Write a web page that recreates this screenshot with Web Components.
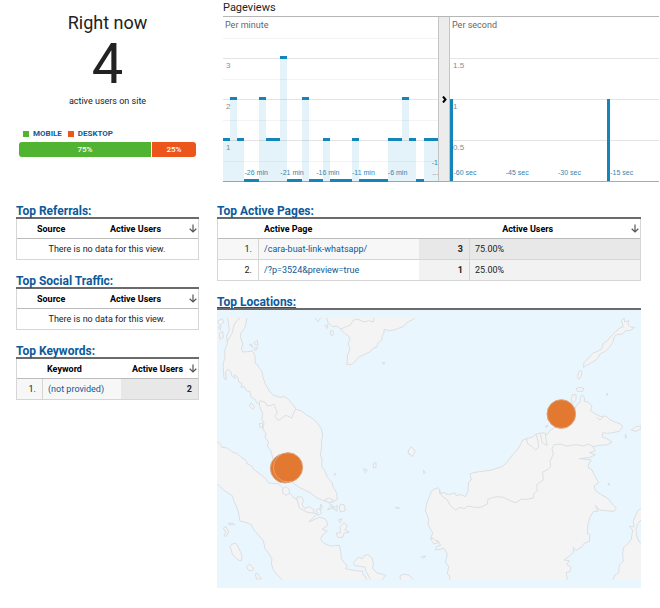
<!DOCTYPE html>
<html lang="en">
<head>
<meta charset="utf-8">
<title>Real-time overview</title>
<style>
  :root {
    --font: Roboto, "Liberation Sans", sans-serif;
    --fs-xs: 8px;
    --fs-sm: 9px;
    --fs-md: 11px;
    --fs-lg: 12px;
    --link: #0b5a9a;
    --accent: #1485b8;
    --line: #d6d6d6;
    --rule: #6b6b6b;
  }
  body {
    margin: 0;
    background: #fff;
    color: #222;
    font-family: var(--font);
    font-size: var(--fs-sm);
  }
</style>
</head>
<body>
<realtime-page>
  <active-counter slot="counter" count="4">
    <span slot="title">Right now</span>
    <span slot="caption">active users on site</span>
    <device-split></device-split>
  </active-counter>
  <pageviews-panel slot="charts">
    <bar-chart id="minutes" slot="minute">Per minute</bar-chart>
    <bar-chart id="seconds" slot="second">Per second</bar-chart>
  </pageviews-panel>
  <report-panel slot="side"><a href="#referrals">Top Referrals:</a>
    <report-table id="referrals" slot="body"></report-table></report-panel>
  <report-panel slot="side"><a href="#social">Top Social Traffic:</a>
    <report-table id="social" slot="body"></report-table></report-panel>
  <report-panel slot="side"><a href="#keywords">Top Keywords:</a>
    <report-table id="keywords" slot="body"></report-table></report-panel>
  <report-panel slot="main"><a href="#pages">Top Active Pages:</a>
    <report-table id="pages" slot="body"></report-table></report-panel>
  <report-panel slot="main" underlined><a href="#locations">Top Locations:</a>
    <location-map id="locations" slot="body"></location-map></report-panel>
</realtime-page>

<script>
function define(name, html, Base = class extends HTMLElement {}) {
  const template = document.createElement('template');
  template.innerHTML = html;
  customElements.define(name, class extends Base {
    connectedCallback() {
      if (this.shadowRoot) return;
      this.attachShadow({ mode: 'open' }).append(template.content.cloneNode(true));
      this.render?.();
    }
  });
}

define('realtime-page', `
  <style>
    :host { display: block; padding: 0 1px 20px 16px; }
    .top { display: grid; grid-template-columns: 183px minmax(0, 1fr); gap: 24px; height: 203px; }
    .reports {
      display: grid;
      grid-template-columns: 183px minmax(0, 1fr);
      gap: 18px;
      align-items: start;
      padding-right: 18px;
    }
    .col { display: flex; flex-direction: column; gap: 13px; min-width: 0; }
  </style>
  <section class="top"><slot name="counter"></slot><slot name="charts"></slot></section>
  <section class="reports">
    <div class="col"><slot name="side"></slot></div>
    <div class="col"><slot name="main"></slot></div>
  </section>
`);

define('active-counter', `
  <style>
    :host { display: flex; flex-direction: column; text-align: center; padding-top: 12px; }
    h1 { margin: 0; font-size: 18px; line-height: 22px; font-weight: 400; }
    .count { font-size: 56px; line-height: 60px; }
    p { margin: 0 0 20px; line-height: 14px; }
  </style>
  <h1><slot name="title"></slot></h1>
  <div class="count"></div>
  <p><slot name="caption"></slot></p>
  <slot></slot>
`, class extends HTMLElement {
  render() {
    this.shadowRoot.querySelector('.count').textContent = this.getAttribute('count');
  }
});

define('device-split', `
  <style>
    :host { display: block; padding: 0 3px; }
    ul {
      display: flex;
      gap: 6px;
      margin: 0 0 3px;
      padding: 0 4px;
      list-style: none;
      color: var(--link);
      font-size: var(--fs-xs);
      font-weight: 700;
      line-height: 11px;
    }
    li { display: flex; align-items: center; gap: 4px; }
    li::before { content: ""; width: 6px; height: 6px; background: var(--c); }
    .mobile { --c: #50b432; }
    .desktop { --c: #ed561b; }
    .bar { display: flex; gap: 1px; height: 15px; border-radius: 3px; overflow: hidden; }
    .bar span {
      flex: 1;
      background: var(--c);
      color: #fff;
      font-size: var(--fs-xs);
      font-weight: 500;
      line-height: 15px;
      text-align: center;
    }
    .bar .mobile { flex-grow: 3; }
  </style>
  <ul><li class="mobile">MOBILE</li><li class="desktop">DESKTOP</li></ul>
  <div class="bar"><span class="mobile">75%</span><span class="desktop">25%</span></div>
`);

define('pageviews-panel', `
  <style>
    :host { display: block; min-width: 0; }
    h2 { margin: 0; font-size: var(--fs-md); line-height: 16px; font-weight: 400; }
    .charts {
      display: grid;
      grid-template-columns: minmax(0, 215fr) 12px minmax(0, 209fr);
      height: 164px;
      border-top: 1px solid #b5b5b5;
      border-bottom: 1px solid #aaa;
    }
    button {
      display: grid;
      place-items: center;
      padding: 0;
      border: solid #c4c4c4;
      border-width: 0 1px;
      background: #ececec;
    }
  </style>
  <h2>Pageviews</h2>
  <div class="charts">
    <slot name="minute"></slot>
    <button type="button" aria-label="Collapse per minute chart">
      <svg width="5" height="7" viewBox="0 0 5 7" fill="none" stroke="#000" stroke-width="2"><path d="M1 .5 3.500 3.500 1 6.500"/></svg>
    </button>
    <slot name="second"></slot>
  </div>
`);

define('bar-chart', `
  <style>
    :host { position: relative; display: block; min-width: 0; color: #666; }
    .title { position: relative; display: block; padding-left: 2px; font-size: var(--fs-sm); line-height: 17px; }
    .plot, .lines, .x { position: absolute; inset: 0; display: grid; }
    .plot { grid-template-columns: repeat(var(--n), minmax(0, 1fr)); align-items: end; }
    .lines { grid-template-rows: repeat(var(--rows), 1fr); }
    .lines span {
      box-sizing: border-box;
      padding: 2px 0 0 3px;
      border-top: 1px solid #f3f3f3;
      color: #8c8c8c;
      font: var(--fs-xs)/10px "Liberation Sans", sans-serif;
    }
    .lines span:first-child { border-color: transparent; }
    .lines .major { border-color: #e4e4e4; }
    .bar { height: calc(var(--v) * 1%); background: rgb(5 141 199 / 11%); }
    .step .bar { border-top: 3px solid var(--accent); margin-bottom: -1px; }
    .solid .bar { background: var(--accent); }
    .x {
      grid-template-columns: repeat(var(--n), minmax(0, 1fr));
      align-items: end;
      padding-bottom: 3px;
      color: #3585b0;
      font: 7px/10px "Liberation Sans", sans-serif;
      white-space: nowrap;
    }
    .x span { grid-row: 1; }
  </style>
  <div class="lines"></div>
  <div class="plot"></div>
  <div class="x"></div>
  <span class="title"><slot></slot></span>
`, class extends HTMLElement {
  set data(d) {
    const $ = (s) => this.shadowRoot.querySelector(s);
    this.style.setProperty('--n', d.values.length);
    this.style.setProperty('--rows', d.rows.length);
    $('.lines').innerHTML = d.rows.map((r) => `<span class="${r === '' ? '' : 'major'}">${r}</span>`).join('');
    $('.plot').classList.add(d.kind);
    $('.plot').innerHTML = d.values
      .map((v) => (v || d.kind === 'step' ? `<i class="bar" style="--v:${(v / d.max) * 100}"></i>` : '<i></i>'))
      .join('');
    $('.x').innerHTML = d.labels
      .map(([at, text, align = 'start']) => `<span style="grid-column:${at};justify-self:${align};text-align:right">${text}</span>`)
      .join('');
  }
});

define('report-panel', `
  <style>
    :host { display: block; }
    h2 {
      margin: 0;
      padding-top: 2px;
      border-bottom: 2px solid var(--rule);
      font-size: var(--fs-lg);
      font-weight: 700;
      line-height: 12px;
    }
    ::slotted(a) { color: var(--link); text-decoration: none; }
    :host([underlined]) ::slotted(a) { text-decoration: underline; }
  </style>
  <h2><slot></slot></h2>
  <slot name="body"></slot>
`);

define('report-table', `
  <style>
    :host { display: block; }
    table {
      width: 100%;
      border: 1px solid var(--line);
      border-top: 0;
      border-collapse: separate;
      border-spacing: 0;
      table-layout: fixed;
    }
    th, td { box-sizing: border-box; padding: 0 6px 0 5px; font-size: var(--fs-sm); line-height: 12px; text-align: left; }
    th { height: 20px; padding-right: 0; border-bottom: 1px solid #bbb; color: #000; font-weight: 700; white-space: nowrap; }
    td { height: 20px; }
    tr + tr td { height: 21px; border-top: 1px solid var(--line); }
    .sort { display: flex; align-items: center; padding-right: 1px; }
    .sort span { flex: 1; text-align: center; }
    .num { border-right: 1px solid var(--line); text-align: right; }
    .ranked tbody tr:first-child { background: #f7f7f7; }
    .users { background: #f2f2f2; }
    .ranked tr:first-child .users { background: #e8e8e8; }
    .count { font-weight: 700; text-align: right; }
    .split .count { border-right: 1px solid var(--line); }
    .empty td { text-align: center; }
    a { color: var(--link); text-decoration: none; }
  </style>
  <table></table>
`, class extends HTMLElement {
  set data({ cols, head, indent, rows }) {
    const ranked = rows.length > 0;
    const split = ranked && rows[0].length === 3;
    const row = ([name, count, share], i) => `
      <tr>
        <td class="num">${i + 1}.</td>
        <td><a href="#">${name}</a></td>
        <td class="users count">${count}</td>
        ${share ? `<td class="users">${share}</td>` : ''}
      </tr>`;
    this.shadowRoot.querySelector('table').className = `${ranked ? 'ranked' : 'empty'} ${split ? 'split' : ''}`;
    this.shadowRoot.querySelector('table').innerHTML = `
      <colgroup>${cols.map((w) => `<col style="width:${w}">`).join('')}</colgroup>
      <thead><tr>
        <th colspan="${ranked ? 2 : 1}" style="padding-left:${indent}px">${head}</th>
        <th colspan="${split ? 2 : 1}"><div class="sort"><span>Active Users</span>
          <svg width="8" height="9" viewBox="0 0 8 9" fill="none" stroke="#555" stroke-width="1.2"><path d="M4 .5V8M.7 4.800 4 8l3.300-3.200"/></svg>
        </div></th>
      </tr></thead>
      <tbody>${ranked ? rows.map(row).join('') : '<tr><td colspan="2">There is no data for this view.</td></tr>'}</tbody>`;
  }
});

define('location-map', `
  <style>
    :host { display: block; background: #e9f6fe; }
    svg { display: block; width: 100%; height: auto; }
    .land path { fill: #f4f4f4; stroke: #dbdee0; stroke-width: 3; stroke-linejoin: round; }
    .land .border { fill: none; }
    .pin { fill: #e37830; stroke: #dba681; stroke-width: 3; }
  </style>
  <svg viewBox="21 30 1272 834" role="img" aria-label="Map of active users">
    <clipPath id="tiles"><rect x="21" y="54" width="1272" height="785"/></clipPath>
    <g class="land" clip-path="url(#tiles)">
      <!-- Malay peninsula -->
      <path d="M50 40 55 68 58 90 50 108 52 130 44 150 45 170 39 195 42 235 49 239 47 215 54 208 62 214 66 228 75 235 74 224 84 233 86 246 96 250 93 262 104 260 109 272 120 275 124 292 136 298 139 308 148 312 151 326 158 340 156 358 162 370 159 388 168 400 165 412 175 425 172 438 182 450 190 480 198 515 225 540 245 546 268 562 300 578 322 594 340 602 352 597 366 607 382 598 380 578 370 562 366 548 352 532 344 512 335 500 336 480 331 465 335 440 334 425 338 405 333 385 323 370 308 355 290 345 275 333 258 328 252 318 232 295 222 290 210 292 190 286 178 273 165 250 158 228 155 212 148 205 144 196 136 190 135 166 127 153 112 155 98 156 94 147 99 132 91 112 93 98 104 85 109 66 112 40Z"/>
      <path class="border" d="M148 312 150 302 165 306 172 318 184 316 192 312 197 325 202 340 194 348 205 362 218 352 228 346 245 354 252 336 258 328M52 125 66 100 72 75 80 62 90 54"/>
      <!-- Sumatra -->
      <path d="M10 418 28 430 36 442 52 444 65 455 82 461 92 471 107 480 112 492 126 498 130 508 150 522 166 535 176 549 190 550 206 552 222 568 240 580 250 592 262 600 268 616 280 628 298 632 320 642 296 666 328 652 345 656 352 668 353 676 336 688 352 694 336 706 332 718 342 730 362 738 388 736 392 755 394 775 402 788 412 796 406 806 416 808 438 812 458 814 460 826 466 830 474 850 224 850 213 836 198 820 189 808 184 790 186 778 176 760 165 746 160 722 146 706 132 690 122 672 104 666 90 663 86 640 80 620 72 604 68 588 52 578 38 568 26 554 10 550Z"/>
      <!-- Riau and Bangka -->
      <path d="M218 566 228 560 238 568 238 580 228 586 218 580ZM260 592 274 590 280 600 276 614 284 626 298 620 312 630 310 640 290 636 268 624ZM318 630 330 626 334 640 324 646ZM332 612 338 622 330 630ZM342 602 356 594 370 600 360 608ZM352 630 362 618 376 630 368 624ZM390 614 402 614 406 632 392 636 388 624ZM358 610 374 622 382 616 380 634ZM384 660 396 656 390 668ZM390 680 402 668 412 678 404 690 418 696 402 700 398 712 384 712 378 700 392 698Z"/>
      <path d="M430 790 444 772 458 776 464 766 474 764 486 774 490 792 488 806 500 818 520 824 528 826 518 836 520 850 486 850 478 832 466 810 466 802 448 798 436 798ZM570 828 580 822 598 826 610 839 606 845 572 845Z"/>
      <!-- west coast islands -->
      <path d="M40 684 48 680 56 696 48 710 42 706 48 698ZM54 670 68 670 74 674 60 675ZM60 740 66 732 78 730 86 744 96 766 94 782 84 780 68 764ZM110 800 118 792 130 804 128 812 116 812ZM136 822 142 820 154 836 140 838ZM118 318 124 308 134 322 128 328ZM148 370 158 370 158 382 150 382ZM132 128 142 122 144 136 136 134ZM118 134 124 132 128 142ZM134 144 142 142 140 150 132 150ZM22 64 36 56 42 66 30 76ZM24 82 34 78 30 90ZM28 100 38 94 40 112 30 118Z"/>
      <!-- Indochina -->
      <path d="M346 40 354 68 368 80 382 78 392 88 404 100 416 108 420 118 414 132 420 146 412 168 412 188 408 192 424 194 434 186 448 170 462 164 482 154 490 144 500 142 504 128 516 120 516 110 522 98 522 88 538 92 552 90 568 84 582 78 592 66 606 60 620 50Z"/>
      <path class="border" d="M390 88 404 82 420 76 430 60 444 58 462 66 476 62 490 66 492 50"/>
      <path d="M314 52 332 54 324 66ZM344 78 354 74 352 86ZM362 92 370 94 368 108 360 102ZM516 188 524 188 522 193ZM596 450 604 440 616 454 606 470 600 462 594 462ZM490 490 498 488 498 502 490 504ZM460 506 472 510 466 518ZM372 522 376 520 376 526ZM640 510 646 518 642 522ZM556 622 568 624 562 626ZM634 770 648 768 640 776Z"/>
      <!-- Borneo -->
      <path d="M660 585 664 574 672 568 684 563 690 570 688 580 702 578 716 584 734 578 738 586 752 584 766 590 774 574 776 546 784 540 780 522 790 518 808 515 842 511 876 500 888 490 896 480 908 464 920 452 934 430 936 422 952 415 966 412 978 402 1002 398 1012 404 1020 392 1040 378 1065 350 1088 336 1094 330 1100 314 1110 308 1112 292 1117 284 1124 294 1122 304 1134 306 1146 318 1142 332 1156 342 1172 350 1188 348 1198 358 1214 366 1232 372 1238 382 1228 394 1208 398 1192 400 1178 398 1176 410 1194 418 1206 426 1192 434 1168 436 1148 440 1156 452 1138 458 1156 464 1140 472 1108 476 1144 480 1136 492 1134 502 1146 510 1152 524 1166 548 1152 558 1156 572 1174 584 1194 596 1210 616 1219 625 1212 634 1186 632 1168 630 1156 616 1164 634 1150 634 1140 652 1134 672 1132 700 1140 704 1138 724 1122 730 1116 740 1098 752 1090 742 1090 758 1078 768 1062 780 1078 782 1070 794 1084 802 1080 814 1068 818 1074 850 722 850 718 826 712 822 716 800 706 786 712 762 702 744 690 748 676 750 680 740 692 736 684 722 670 722 664 712 668 698 654 674 656 656 646 632 650 610Z"/>
      <path class="border" d="M688 570 694 586 712 600 722 618 736 630 750 622 764 626 774 618 796 622 812 622 832 612 834 598 848 592 864 590 880 592 900 602 918 608 932 598 950 598 970 594 972 580 982 572 980 554 1000 540 998 516 1014 508 1022 500 1020 484 1030 462 1026 446 1032 434 1050 432 1070 438 1098 434 1120 438 1134 432 1150 440M950 416 952 430 966 440 976 450 986 442 984 424 978 402M992 402 996 428 1012 436 1008 418 1006 402M1160 352 1170 360 1180 350"/>
      <path d="M1084 296 1088 284 1098 284 1098 298 1090 308 1084 304ZM1098 266 1110 262 1122 266 1118 274 1102 274ZM1102 230 1108 212 1116 214 1114 228 1106 238ZM1188 282 1194 280 1192 286ZM1006 378 1014 376 1010 384ZM1246 402 1250 412 1246 414ZM1264 390 1276 380 1293 378 1293 386 1278 394ZM1194 550 1200 552 1196 556ZM660 714 672 716 684 728 672 732Z"/>
      <!-- Palawan -->
      <path d="M1120 202 1122 188 1136 174 1148 160 1162 154 1176 146 1180 130 1192 122 1204 108 1218 94 1230 84 1240 80 1234 62 1242 54 1244 66 1256 62 1254 74 1264 82 1274 82 1260 92 1248 92 1236 102 1220 104 1212 112 1208 128 1198 142 1186 154 1170 162 1162 176 1148 186 1130 196Z"/>
      <!-- Sulawesi -->
      <path d="M1300 620 1284 632 1276 648 1270 662 1272 680 1258 680 1268 690 1264 718 1254 730 1240 744 1238 764 1240 784 1228 794 1226 818 1214 826 1206 850 1300 850 1300 736 1288 726 1280 708 1278 688 1284 670 1300 652Z"/>
    </g>
    <circle class="pin" cx="225" cy="505" r="44"/>
    <circle class="pin" cx="234" cy="502" r="44"/>
    <circle class="pin" cx="1054" cy="342" r="43"/>
  </svg>
`);

const $ = (id) => document.getElementById(id);

$('minutes').data = {
  kind: 'step',
  max: 4,
  values: [1, 2, 1, 0, 0, 2, 1, 1, 3, 0, 0, 2, 0, 0, 1, 0, 0, 0, 1, 0, 0, 0, 0, 1, 1, 2, 1, 0, 1, 1],
  rows: ['', '', 3, '', 2, '', 1, ''],
  labels: [
    ['4', '-26 min'], ['9', '-21 min'], ['14', '-16 min'],
    ['19', '-11 min'], ['24', '-6 min'], ['30', '-1<br>...', 'end'],
  ],
};

const perSecond = new Array(60).fill(0);
perSecond[0] = perSecond[45] = 1;
$('seconds').data = {
  kind: 'solid',
  max: 2,
  values: perSecond,
  rows: ['', 1.5, 1, 0.5],
  labels: [['2', '-60 sec'], ['17', '-45 sec'], ['32', '-30 sec'], ['47', '-15 sec']],
};

$('referrals').data = { cols: ['60px', 'auto'], head: 'Source', indent: 20, rows: [] };
$('social').data = { cols: ['60px', 'auto'], head: 'Source', indent: 20, rows: [] };
$('keywords').data = {
  cols: ['26px', 'auto', '77px'],
  head: 'Keyword',
  indent: 30,
  rows: [['(not provided)', 2]],
};
$('pages').data = {
  cols: ['41px', '38%', '12%', 'auto'],
  head: 'Active Page',
  indent: 46,
  rows: [['/cara-buat-link-whatsapp/', 3, '75.00%'], ['/?p=3524&amp;preview=true', 1, '25.00%']],
};
</script>
</body>
</html>
